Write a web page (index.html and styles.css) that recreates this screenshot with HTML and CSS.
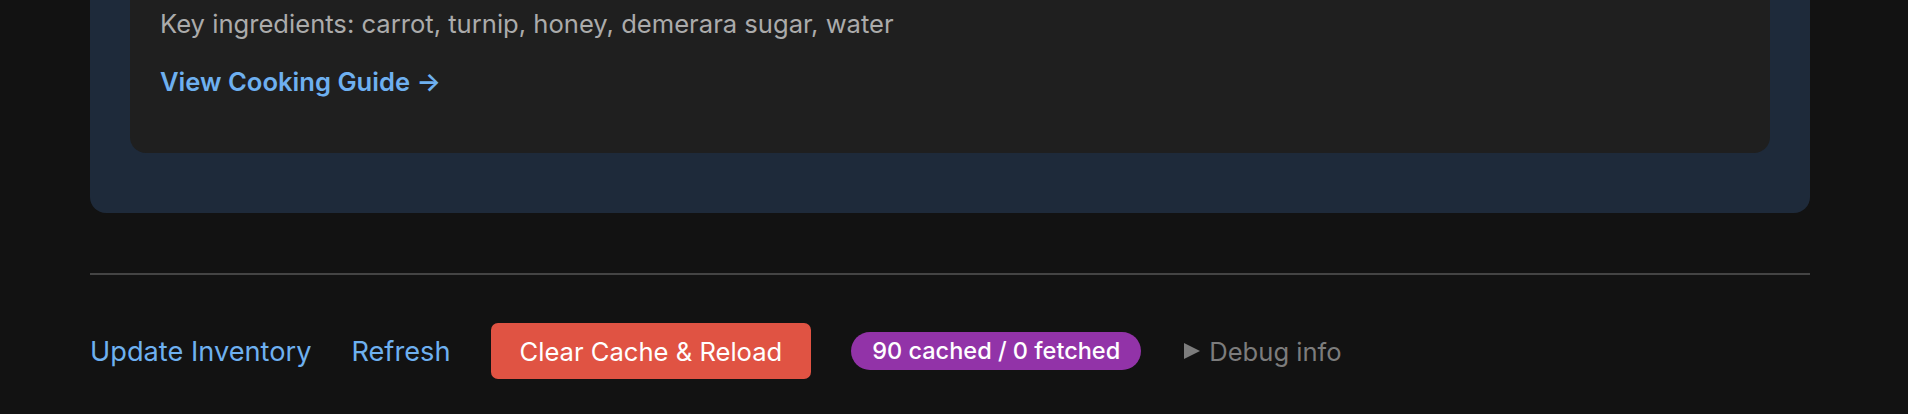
FILE: index.html
```html
<!DOCTYPE html>
<html lang="en">
<head>
<meta charset="utf-8">
<title>Recipe</title>
<link rel="stylesheet" href="styles.css">
</head>
<body>
<div class="page">
  <section class="panel">
    <article class="recipe">
      <p class="ingredients">Key ingredients: carrot, turnip, honey, demerara sugar, water</p>
      <a class="guide-link" href="#">View Cooking Guide →</a>
    </article>
  </section>
  <hr class="divider">
  <div class="actions">
    <a class="action-link" href="#">Update Inventory</a>
    <a class="action-link" href="#">Refresh</a>
    <button class="btn-danger" type="button">Clear Cache &amp; Reload</button>
    <span class="badge">90 cached / 0 fetched</span>
    <details class="debug">
      <summary>Debug info</summary>
    </details>
  </div>
</div>
</body>
</html>
```
FILE: styles.css
```css
html, body {
  margin: 0;
  padding: 0;
  background: #121212;
  height: 100%;
  overflow: hidden;
}
body {
  font-family: Inter, "Noto Sans", "Liberation Sans", sans-serif;
  color: #e0e0e0;
}
.page {
  width: 1720px;
  margin-left: 90px;
}
.panel {
  margin-top: -80px;
  background: #1e2a3a;
  border-radius: 16px;
  padding: 40px 40px 60px;
}
.recipe {
  background: #1f1f1f;
  border-radius: 16px;
  padding: 44px 30px 52px 30px;
}
.ingredients {
  margin: 0 0 19px;
  font-size: 25.6px;
  line-height: 39px;
  color: #ababab;
}
.guide-link {
  display: block;
  font-size: 25.6px;
  line-height: 39px;
  font-weight: 600;
  color: #6eb0f0;
  text-decoration: none;
}
.divider {
  margin: 60px 0 0;
  border: 0;
  border-top: 2px solid #444;
  height: 0;
}
.actions {
  display: flex;
  align-items: center;
  gap: 40px;
  margin-top: 48px;
  height: 56px;
}
.action-link {
  font-size: 27.2px;
  color: #6eb0f0;
  text-decoration: none;
}
.btn-danger {
  font-family: inherit;
  font-size: 25.6px;
  color: #fff;
  background: #e05343;
  border: 0;
  border-radius: 7px;
  height: 56px;
  padding: 0 29px;
}
.badge {
  font-size: 23.5px;
  font-weight: 500;
  color: #fff;
  background: #9233a8;
  border-radius: 19px;
  height: 38px;
  line-height: 38px;
  padding: 0 21px;
}
.debug {
  margin-left: 3px;
}
.debug summary {
  display: flex;
  align-items: center;
  list-style: none;
  font-size: 25.6px;
  color: #7c7c7c;
  cursor: pointer;
}
.debug summary::-webkit-details-marker {
  display: none;
}
.debug summary::before {
  content: "";
  width: 0;
  height: 0;
  border-left: 16px solid #7c7c7c;
  border-top: 8.5px solid transparent;
  border-bottom: 8.5px solid transparent;
  margin-right: 9px;
}
```
